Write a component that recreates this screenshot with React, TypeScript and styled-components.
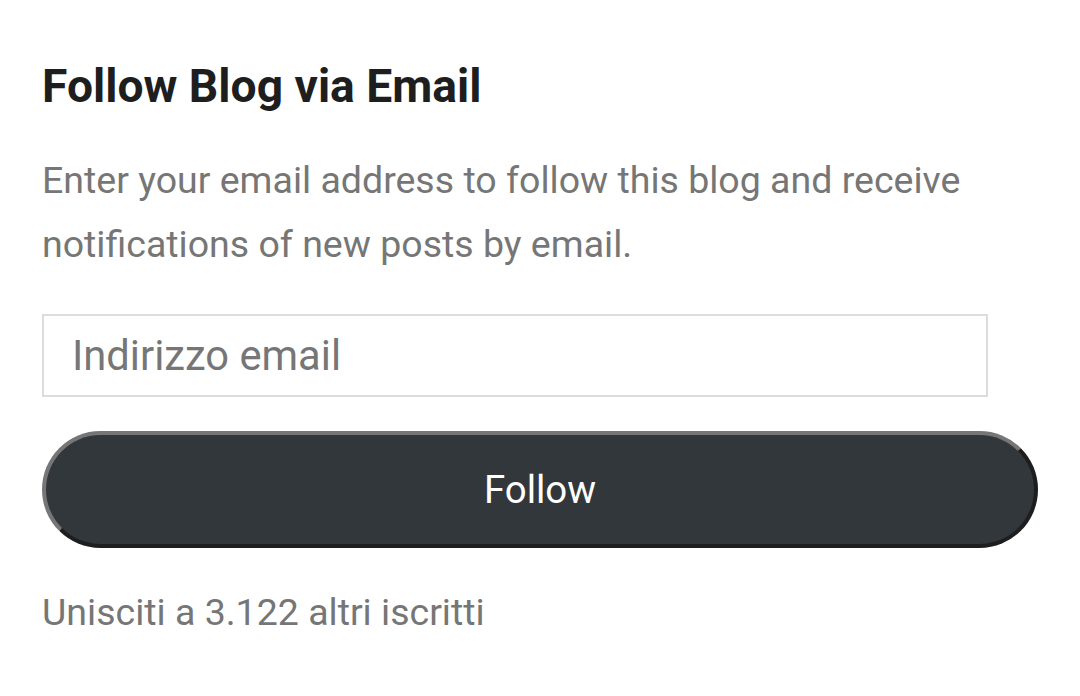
import React from 'react';
import styled, { createGlobalStyle } from 'styled-components';

const GlobalStyle = createGlobalStyle`
    html, body {
        margin: 0;
        padding: 0;
        background: #ffffff;
    }
    body {
        font-family: Roboto, "Liberation Sans", sans-serif;
    }
`;

const Widget = styled.section`
    padding: 58px 42px 0 42px;
    display: flex;
    flex-direction: column;
`;

const Title = styled.h2`
    margin: 0;
    font-size: 46.2px;
    line-height: 57.6px;
    font-weight: 700;
    color: #1e1e1e;
`;

const Intro = styled.p`
    margin: 32px 0 0 0;
    font-size: 37.5px;
    line-height: 64px;
    color: #767676;
`;

const Form = styled.form`
    display: flex;
    flex-direction: column;
    margin-top: 38px;
`;

const EmailInput = styled.input`
    box-sizing: border-box;
    width: 946px;
    height: 83px;
    border: 2px solid #dcdcdc;
    border-radius: 0;
    padding: 0 28px;
    font-family: Roboto, "Liberation Sans", sans-serif;
    font-size: 41.7px;
    color: #1e1e1e;
    outline: none;
    &::placeholder {
        color: #767676;
        opacity: 1;
    }
`;

const FollowButton = styled.button`
    box-sizing: border-box;
    margin-top: 34px;
    width: 996px;
    height: 117px;
    border: 4px solid;
    border-color: #767676 #1e1e1e #1e1e1e #767676;
    border-radius: 60px;
    background: #32373c;
    color: #ffffff;
    font-family: Roboto, "Liberation Sans", sans-serif;
    font-size: 38.4px;
    cursor: pointer;
`;

const Count = styled.p`
    margin: 32px 0 0 0;
    font-size: 37.5px;
    line-height: 64px;
    color: #767676;
`;

const App: React.FC = (): JSX.Element => {
    return (
        <>
            <GlobalStyle />
            <Widget>
                <Title>Follow Blog via Email</Title>
                <Intro>
                    Enter your email address to follow this blog and receive notifications of new posts by email.
                </Intro>
                <Form onSubmit={(e) => e.preventDefault()}>
                    <EmailInput type="email" name="email" placeholder="Indirizzo email" />
                    <FollowButton type="submit">Follow</FollowButton>
                </Form>
                <Count>Unisciti a 3.122 altri iscritti</Count>
            </Widget>
        </>
    );
};

export default App;
